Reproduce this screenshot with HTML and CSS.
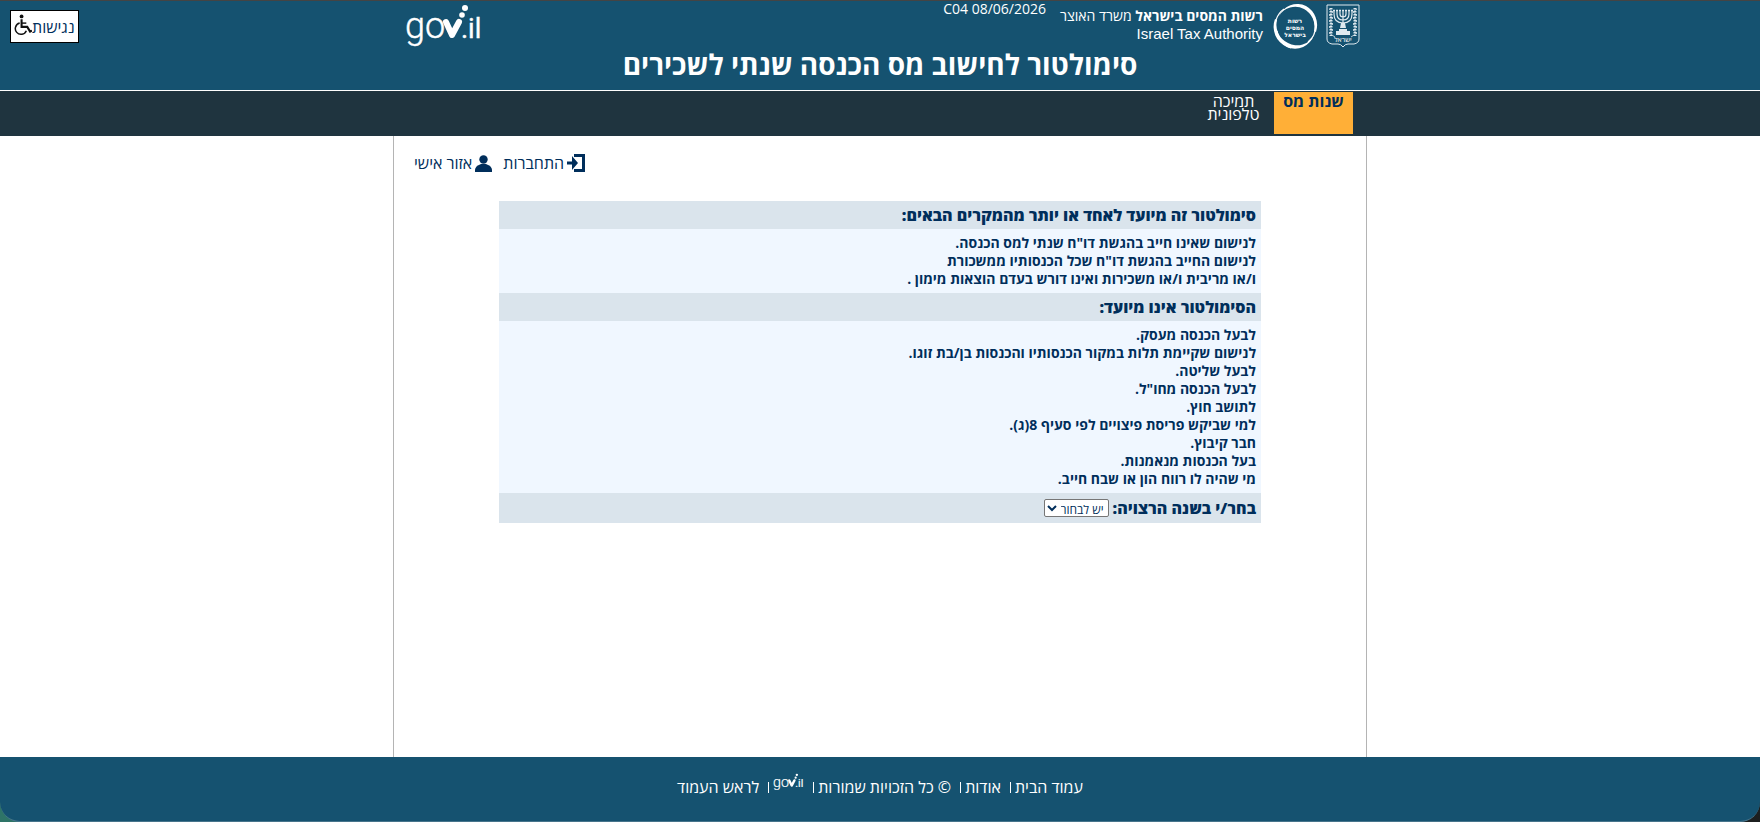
FILE: index.html
```html
<!DOCTYPE html>
<html lang="he" dir="rtl">

<head>
    <meta charset="UTF-8">
    <title>סימולטור לחישוב מס הכנסה שנתי לשכירים</title>
    <meta name="viewport" content="width=device-width, initial-scale=1.0">
    <link rel="stylesheet" href="styles.css">
</head>

<body>

    <!-- Accessibility -->
    <button type="button" class="accessibility">
        נגישות
        <svg width="18" height="22" viewBox="0 0 19 22" aria-hidden="true">
            <circle cx="8" cy="2" r="2" fill="#111" />
            <path d="M8 5v8h6l3 5 2-1" fill="none" stroke="#111" stroke-width="2.2" />
            <path d="M8 9h5" stroke="#111" stroke-width="1.5" />
            <path d="M6 9a6 6 0 1 0 7 8" fill="none" stroke="#111" stroke-width="1.6" />
        </svg>
    </button>

    <header class="header" id="top">
        <div class="header-inner">
            <div class="brand">
                <svg class="emblem" width="34" height="44" viewBox="0 0 34 44" aria-hidden="true">
                    <g fill="none" stroke="#dfe9ef">
                        <path d="M1 1h32v34q0 4-5 5h-6q-3 0-5 3-2-3-5-3H6q-5-1-5-5z" stroke-width="1" />
                        <path d="M11 7v3q0 6 6 6t6-6V7M14 7v3q0 3 3 3t3-3V7M17 6v18M8 7v3q0 9 9 9t9-9V7" stroke-width="1.2" />
                        <path d="M7 6.5h20" stroke-width="1.5" stroke-dasharray="2 1" />
                        <path d="M5 4v28M29 4v28" stroke-width="3" stroke-dasharray="1.5 1.5" />
                        <path d="M3 5l4 3-4 3 4 3-4 3 4 3-4 3 4 3-4 3 6 4M31 5l-4 3 4 3-4 3 4 3-4 3 4 3-4 3 4 3-6 4" stroke-width=".8" />
                    </g>
                    <path d="M15 19h4l1 5h-6zM13 25h8v2h3v4H10v-4h3z" fill="#dfe9ef" />
                    <text x="17" y="38" class="emblem-text">ישראל</text>
                </svg>
                <svg class="seal" width="45" height="45" viewBox="0 0 45 45" aria-hidden="true">
                    <path fill="#fff" d="M6 12A20 20 0 0 1 33 2A22 22 0 0 1 43 28L41 27A20 20 0 0 0 31 5A19 19 0 0 0 6 12z" />
                    <path fill="#fff" d="M41 31A20 20 0 0 1 14 43A22 22 0 0 1 2 15L4 16A20 20 0 0 0 15 39A19 19 0 0 0 41 31z" />
                    <path fill="none" stroke="#fff" stroke-width="1.2" d="M3 28A21 21 0 0 1 11 5M34 6A20 20 0 0 1 35 38M18 44A20 20 0 0 1 4 27" />
                    <text x="22" y="19" class="seal-text">רשות</text>
                    <text x="22" y="26" class="seal-text">המסים</text>
                    <text x="22" y="33" class="seal-text">בישראל</text>
                </svg>
                <div class="brand-name">
                    <div><b>רשות המסים בישראל</b> משרד האוצר</div>
                    <div class="brand-en" dir="ltr">Israel Tax Authority</div>
                </div>
                <div class="version" dir="ltr">C04 08/06/2026</div>
            </div>
            <a href="#" class="gov-logo" aria-label="gov.il">
                <svg width="78" height="44" viewBox="0 0 78 44" direction="ltr">
                    <text x="0" y="34" class="gov-text">go</text>
                    <path d="M41 18l6 13 7-13" class="gov-v" />
                    <text x="56" y="34" class="gov-text gov-small">.il</text>
                    <circle cx="57" cy="11" r="2.8" fill="#fff" />
                    <circle cx="60" cy="4" r="3" fill="#fff" />
                </svg>
            </a>
        </div>
        <h1>סימולטור לחישוב מס הכנסה שנתי לשכירים</h1>
    </header>

    <nav class="nav">
        <div class="nav-inner">
            <a href="#" class="active">שנות מס</a>
            <a href="#">תמיכה טלפונית</a>
        </div>
    </nav>

    <main class="content">
        <div class="user-links">
            <a href="#">
                <svg width="18" height="18" viewBox="0 0 18 18" aria-hidden="true">
                    <path d="M7 1.5h9.500v15H7" fill="none" stroke="#002e5b" stroke-width="3" />
                    <path d="M0 7.5h5V2l6 7-6 7v-5.500H0z" fill="#002e5b" />
                </svg>
                התחברות
            </a>
            <a href="#">
                <svg width="17" height="17" viewBox="0 0 17 17" aria-hidden="true">
                    <circle cx="8.5" cy="4.5" r="4.2" fill="#002e5b" />
                    <path d="M0 17v-2q0-4 6-6h5q6 2 6 6v2z" fill="#002e5b" />
                </svg>
                אזור אישי
            </a>
        </div>

        <section class="info">
            <h2>סימולטור זה מיועד לאחד או יותר מהמקרים הבאים:</h2>
            <ul>
                <li>לנישום שאינו חייב בהגשת דו"ח שנתי למס הכנסה.</li>
                <li>לנישום החייב בהגשת דו"ח שכל הכנסותיו ממשכורת<br>ו/או מריבית ו/או משכירות ואינו דורש בעדם הוצאות מימון .</li>
            </ul>
            <h2>הסימולטור אינו מיועד:</h2>
            <ul>
                <li>לבעל הכנסה מעסק.</li>
                <li>לנישום שקיימת תלות במקור הכנסותיו והכנסות בן/בת זוגו.</li>
                <li>לבעל שליטה.</li>
                <li>לבעל הכנסה מחו"ל.</li>
                <li>לתושב חוץ.</li>
                <li>למי שביקש פריסת פיצויים לפי סעיף 8(ג).</li>
                <li>חבר קיבוץ.</li>
                <li>בעל הכנסות מנאמנות.</li>
                <li>מי שהיה לו רווח הון או שבח חייב.</li>
            </ul>
            <div class="year-row">
                <label for="year">בחר/י בשנה הרצויה:</label>
                <select id="year">
                    <option>יש לבחור</option>
                </select>
            </div>
        </section>
    </main>

    <div class="footer-wrap">
        <footer class="footer">
            <a href="#">עמוד הבית</a>
            <a href="#">אודות</a>
            <a href="#">© כל הזכויות שמורות</a>
            <a href="#" class="footer-gov" aria-label="gov.il">
                <svg width="31" height="18" viewBox="0 0 78 44" direction="ltr">
                    <text x="0" y="34" class="gov-text">go</text>
                    <path d="M41 18l6 13 7-13" class="gov-v" />
                    <text x="56" y="34" class="gov-text gov-small">.il</text>
                    <circle cx="57" cy="11" r="2.8" fill="#fff" />
                    <circle cx="60" cy="4" r="3" fill="#fff" />
                </svg>
            </a>
            <a href="#top">לראש העמוד</a>
        </footer>
    </div>

</body>

</html>
```
FILE: styles.css
```css
* {
    box-sizing: border-box;
}

body {
    margin: 0;
    min-height: 100vh;
    display: flex;
    flex-direction: column;
    font-family: "Open Sans", "Noto Sans", sans-serif;
    font-size: 16px;
    color: #002e5b;
    background-color: #fff;
}

a {
    color: inherit;
    text-decoration: none;
}

.accessibility {
    position: absolute;
    top: 10px;
    left: 10px;
    display: flex;
    align-items: center;
    height: 33px;
    padding: 0 3px;
    border: 1px solid #000;
    background-color: #fff;
    color: #002e5b;
    font-family: inherit;
    font-size: 16px;
    cursor: pointer;
}

.accessibility svg {
    margin-bottom: 4px;
}

.header {
    height: 91px;
    border-top: 1px solid #444;
    border-bottom: 1px solid #fff;
    background-color: #155270;
    color: #fff;
}

.header-inner {
    display: flex;
    justify-content: space-between;
    max-width: 974px;
    height: 46px;
    margin: 0 auto;
    padding: 3px 7px 0 12px;
}

.brand {
    display: flex;
    align-items: flex-start;
}

.seal {
    margin: 0 8px 0 10px;
}

.brand-name {
    padding-top: 3px;
    font-size: 14px;
    line-height: 18px;
}

.brand-en {
    font-family: "Liberation Sans", Arial, sans-serif;
    font-size: 15px;
    text-align: right;
}

.version {
    margin-right: 14px;
    font-size: 14px;
    font-weight: 500;
    line-height: 10px;
}

.emblem-text,
.seal-text {
    font-family: "Open Sans", sans-serif;
    font-size: 7px;
    fill: #fff;
    text-anchor: middle;
}

.seal-text {
    font-family: "DejaVu Sans", sans-serif;
    font-size: 6px;
    font-weight: bold;
}

.gov-text {
    font-family: Roboto, sans-serif;
    font-size: 36px;
    font-weight: 300;
    stroke: #fff;
    stroke-width: .4;
    fill: #fff;
}

.gov-small {
    font-size: 27px;
    font-weight: 400;
}

.gov-v {
    fill: none;
    stroke: #fff;
    stroke-width: 6;
    stroke-linecap: round;
    stroke-linejoin: round;
}

h1 {
    margin: 0;
    font-size: 28px;
    line-height: 34px;
    text-align: center;
}

.nav {
    height: 45px;
    padding-top: 1px;
    background-color: #1f343f;
    color: #fff;
}

.nav-inner {
    display: flex;
    gap: 1px;
    max-width: 974px;
    margin: 0 auto;
    padding-right: 14px;
}

.nav a {
    width: 79px;
    height: 42px;
    padding: 3px 8px;
    line-height: 13px;
    text-align: center;
}

.nav .active {
    background-color: #ffaf37;
    color: #002e5b;
    font-weight: bold;
}

.content {
    flex: 1;
    width: 100%;
    max-width: 974px;
    margin: 0 auto;
    border: solid #b4b4b4;
    border-width: 0 1px;
}

.user-links {
    display: flex;
    justify-content: flex-end;
    gap: 11px;
    padding: 16px 0 27px 20px;
    line-height: 22px;
}

.user-links a {
    display: flex;
    align-items: center;
    gap: 3px;
}

.info {
    margin: 0 105px;
    background-color: #f0f7ff;
    font-weight: bold;
}

.info h2,
.year-row {
    margin: 0;
    padding: 0 5px;
    background-color: #dae4ec;
    font-size: 16px;
    font-weight: 800;
    line-height: 28px;
}

.info ul {
    margin: 0;
    padding: 5px;
    list-style: none;
    font-size: 14px;
    line-height: 18px;
}

.year-row {
    display: flex;
    align-items: center;
    gap: 4px;
    height: 30px;
}

.year-row select {
    width: 65px;
    height: 18px;
    padding: 0;
    border: 1px solid #767676;
    border-radius: 2px;
    background-color: #fff;
    color: #002e5b;
    font-family: "Open Sans", sans-serif;
    font-size: 12px;
}

.footer-wrap {
    background: linear-gradient(to right, #2e7467 50%, #1c1f1f 50%);
}

.footer {
    display: flex;
    justify-content: center;
    height: 65px;
    padding-top: 19px;
    border-bottom: 1px solid #47758c;
    border-radius: 0 0 20px 20px;
    background-color: #155270;
    color: #fff;
    line-height: 22px;
}

.footer a + a {
    display: flex;
    margin-right: 4px;
}

.footer a + a::before {
    content: "";
    width: 1px;
    height: 11px;
    margin: 6px 0 0 9px;
    background-color: #fff;
}

.footer-gov svg {
    margin-top: -3px;
}
```
